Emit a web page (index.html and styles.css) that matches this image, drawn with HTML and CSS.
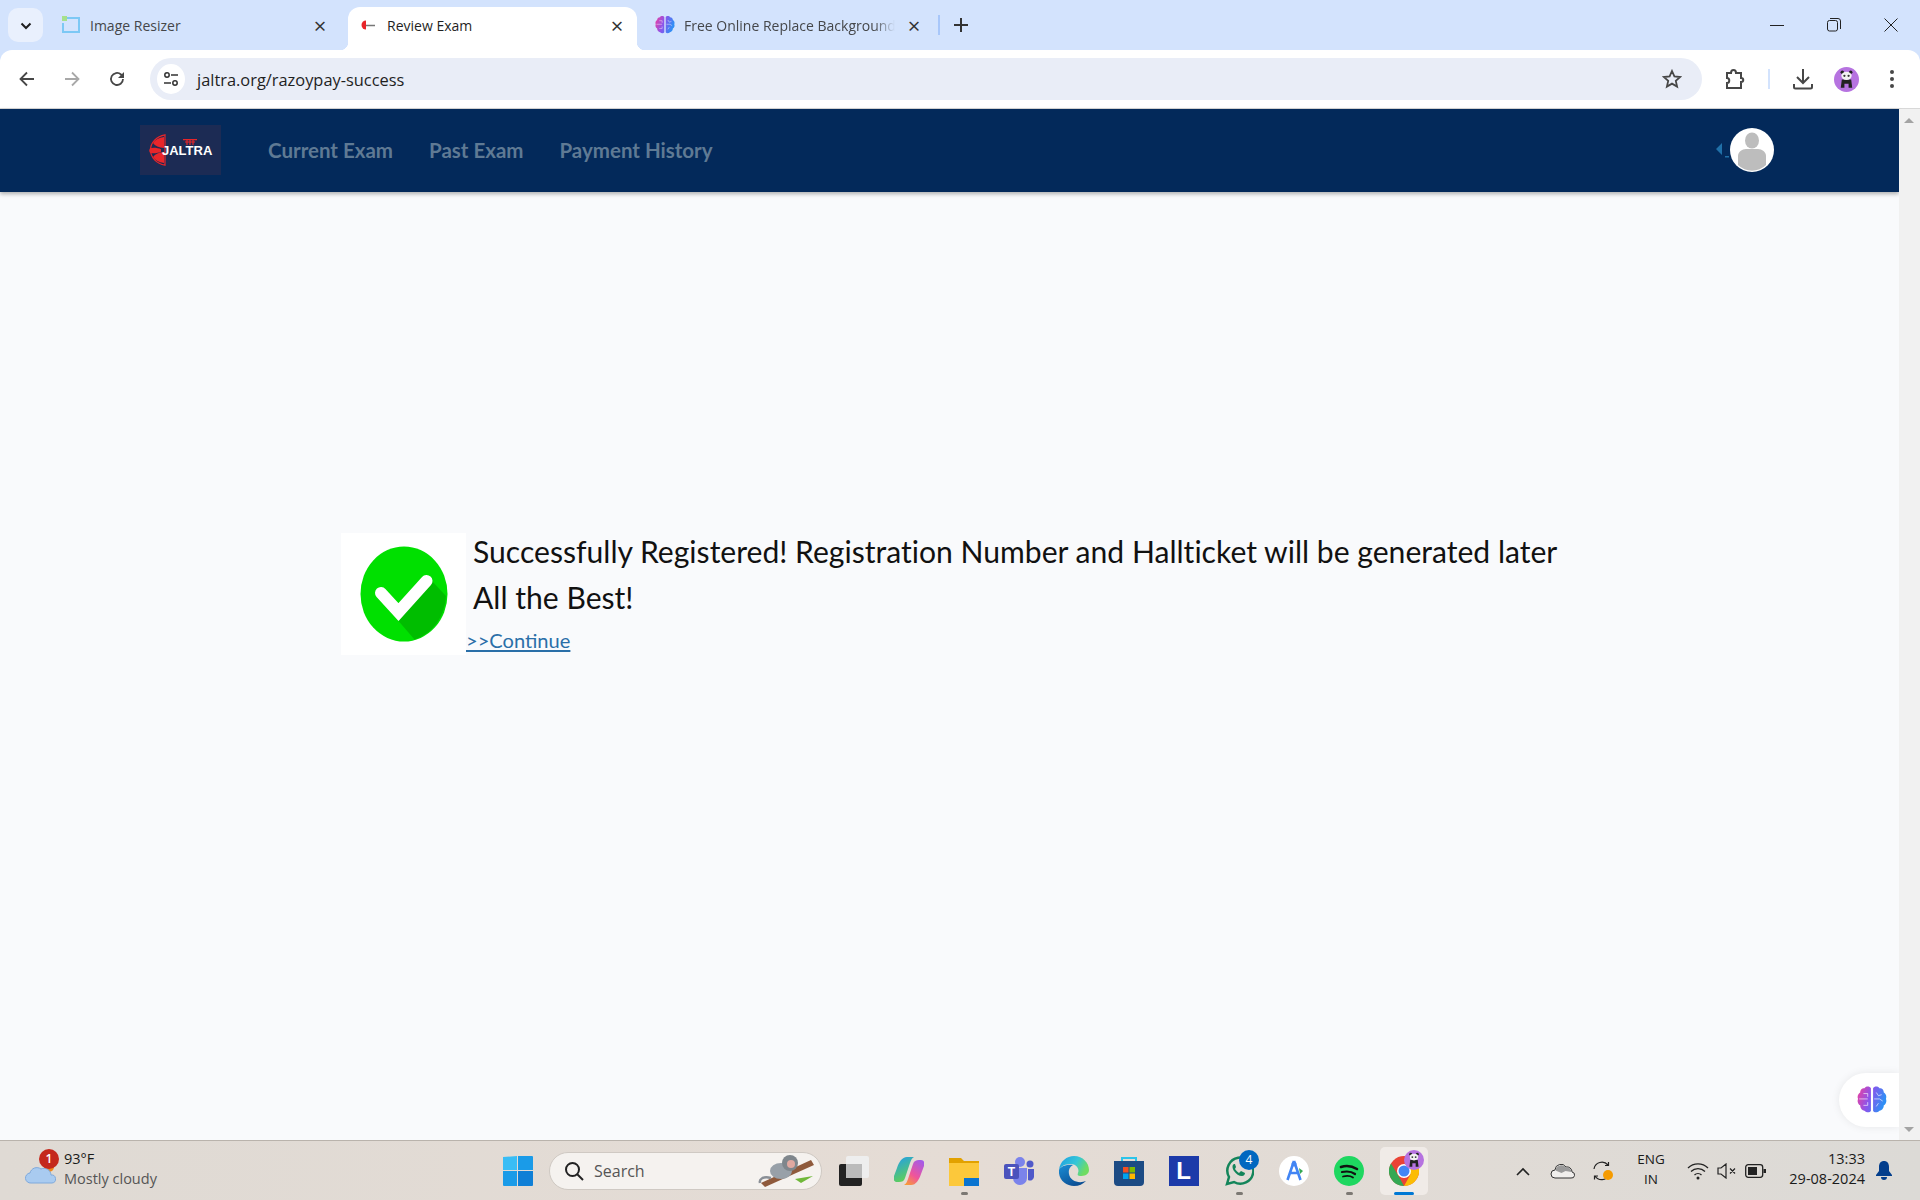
FILE: index.html
```html
<!DOCTYPE html>
<html>
  <head>
    <title>Review Exam</title>
    <link rel="stylesheet" href="styles.css">
  </head>
  <body>
    <svg class="defs" width="0" height="0">
      <defs>
        <linearGradient id="brainGrad" x1="0" y1="0" x2="1" y2="0.3">
          <stop offset="0" stop-color="#f0409c"/>
          <stop offset="0.5" stop-color="#8a55ec"/>
          <stop offset="1" stop-color="#2f8ff5"/>
        </linearGradient>
        <linearGradient id="edgeTop" x1="0" y1="0" x2="1" y2="0.4">
          <stop offset="0" stop-color="#1b9de2"/>
          <stop offset="0.6" stop-color="#35c6d8"/>
          <stop offset="1" stop-color="#6fdc62"/>
        </linearGradient>
        <linearGradient id="edgeLow" x1="0" y1="0" x2="0.6" y2="1">
          <stop offset="0" stop-color="#1a8ed6"/>
          <stop offset="1" stop-color="#0c4f94"/>
        </linearGradient>
        <linearGradient id="copilotLeft" x1="0" y1="0" x2="0.4" y2="1">
          <stop offset="0" stop-color="#1f9cf0"/>
          <stop offset="1" stop-color="#5fcf58"/>
        </linearGradient>
        <linearGradient id="copilotRight" x1="0.8" y1="0" x2="0.2" y2="1">
          <stop offset="0" stop-color="#a45be8"/>
          <stop offset="0.6" stop-color="#f0559a"/>
          <stop offset="1" stop-color="#f79a3a"/>
        </linearGradient>
        <symbol id="brain" viewBox="1 2 28 26">
          <path fill="url(#brainGrad)" d="M14 4c-1-2-5-2-6 0-3 0-4 2-4 4-2 1-3 4-2 6-1 2 0 5 2 6 0 3 2 5 4 5 2 2 5 2 6 0zM16 4c1-2 5-2 6 0 3 0 4 2 4 4 2 1 3 4 2 6 1 2 0 5-2 6 0 3-2 5-4 5-2 2-5 2-6 0z"/>
          <path fill="none" stroke="#fff" stroke-opacity=".65" stroke-width=".9" d="M3 14h8M7 9h4v3M7 20h4v-3M19 8l2 3 3-1M17 14h5l3 2M19 21l2-3"/>
        </symbol>
        <symbol id="panda" viewBox="0 0 24 24">
          <circle cx="12" cy="12" r="12" fill="#b673e0"/>
          <circle cx="8" cy="5" r="1.700" fill="#222"/>
          <circle cx="16" cy="5" r="1.700" fill="#222"/>
          <path fill="#222" d="M7.500 12h9l1 8h-3.500v-4h-4v4H6.500z"/>
          <ellipse cx="12" cy="8.500" rx="5" ry="4" fill="#f2f2f2"/>
          <circle cx="10" cy="8.500" r="1.100" fill="#333"/>
          <circle cx="14" cy="8.500" r="1.100" fill="#333"/>
        </symbol>
      </defs>
    </svg>

    <div class="tabstrip">
      <button class="tab-list">
        <svg width="12" height="8" viewBox="0 0 12 8"><path fill="none" stroke="#1f1f1f" stroke-width="2" d="M1.500 1.500 6 6l4.500-4.500"/></svg>
      </button>
      <div class="tab">
        <svg class="favicon" width="20" height="20" viewBox="0 0 20 20"><path fill="none" stroke="#7cc8f5" stroke-width="2" d="M6 3h12v14H2V8"/><rect x="1" y="1" width="5" height="5" fill="#a6e08c"/></svg>
        <span class="tab-title">Image Resizer</span>
        <span class="tab-close">×</span>
      </div>
      <div class="tab active">
        <svg class="favicon" width="20" height="20" viewBox="0 0 20 20"><path fill="#e8262a" d="M8 5.500v9a4.500 4.500 0 0 1 0-9z"/><path stroke="#777" stroke-width="1.500" d="M8 10.500h9"/></svg>
        <span class="tab-title">Review Exam</span>
        <span class="tab-close">×</span>
      </div>
      <div class="tab">
        <svg class="favicon" width="20" height="20"><use href="#brain"/></svg>
        <span class="tab-title fade">Free Online Replace Background</span>
        <span class="tab-close">×</span>
      </div>
      <span class="tab-sep"></span>
      <span class="new-tab">
        <svg width="14" height="14" viewBox="0 0 14 14"><path stroke="#333" stroke-width="2" d="M7 0v14M0 7h14"/></svg>
      </span>
      <div class="window-controls">
        <svg width="14" height="14" viewBox="0 0 14 14"><path stroke="#222" stroke-width="1" d="M0 7.500h14"/></svg>
        <svg width="14" height="14" viewBox="0 0 14 14"><rect x=".5" y="2.500" width="10" height="10.500" rx="2" fill="none" stroke="#222"/><path fill="none" stroke="#222" d="M3 .5h8a2.500 2.500 0 0 1 2.500 2.500v8"/></svg>
        <svg width="14" height="14" viewBox="0 0 14 14"><path stroke="#222" d="M.5.5l13 13M13.500.5l-13 13"/></svg>
      </div>
    </div>

    <div class="toolbar">
      <svg class="tool" width="16" height="16" viewBox="0 0 16 16"><path fill="none" stroke="#474747" stroke-width="1.800" d="M15 8H2M8 1.500 1.500 8 8 14.500"/></svg>
      <svg class="tool" width="16" height="16" viewBox="0 0 16 16"><path fill="none" stroke="#a8a8a8" stroke-width="1.800" d="M1 8h13M8 1.500 14.500 8 8 14.500"/></svg>
      <svg class="tool" width="16" height="16" viewBox="0 0 16 16"><path fill="none" stroke="#474747" stroke-width="1.800" d="M14 8a6 6 0 1 1-2-4.500L14 5.500"/><path fill="#474747" d="M15 1v6H9z"/></svg>
      <div class="omnibox">
        <span class="site-info">
          <svg width="16" height="16" viewBox="0 0 16 16"><g fill="none" stroke="#333" stroke-width="1.500"><circle cx="4" cy="4" r="2.200"/><circle cx="12" cy="12" r="2.200"/><path d="M8 4h7M1 12h7"/></g></svg>
        </span>
        <span class="url">jaltra.org/razoypay-success</span>
        <svg class="star" width="20" height="20" viewBox="0 0 20 20"><path fill="none" stroke="#474747" stroke-width="1.800" d="m10 2 2.400 5.400 5.800.6-4.400 3.900 1.300 5.700L10 14.600l-5.100 3 1.300-5.700L1.800 8l5.800-.6z"/></svg>
      </div>
      <svg class="tb-puzzle" width="22" height="22" viewBox="0 0 22 22"><path fill="none" stroke="#474747" stroke-width="2" d="M3 5h4c0-4 5-4 5 0h5v5c3 0 3 4 0 4v6H3v-5c3 0 3-5 0-5z"/></svg>
      <span class="tb-sep"></span>
      <svg class="tb-download" width="22" height="22" viewBox="0 0 22 22"><path fill="none" stroke="#474747" stroke-width="2" d="M11 1v13M5 9l6 6 6-6M2 16v3a1.500 1.500 0 0 0 1.500 1.500h15A1.500 1.500 0 0 0 20 19v-3"/></svg>
      <svg class="tb-avatar" width="25" height="25"><use href="#panda"/></svg>
      <svg class="tb-menu" width="4" height="18" viewBox="0 0 4 18"><g fill="#474747"><circle cx="2" cy="2" r="2"/><circle cx="2" cy="9" r="2"/><circle cx="2" cy="16" r="2"/></g></svg>
    </div>

    <div class="viewport">
      <div class="page">
        <nav class="navbar">
          <div class="logo">
            <svg class="logo-mark" width="20" height="32" viewBox="0 0 20 32">
              <path fill="none" stroke="#e8262a" stroke-width="1.200" d="M19 .8A18 15.500 0 0 0 19 31.200z"/>
              <path fill="#e8262a" d="M18 3c-5 .5-9 3-11 6 2 3 6 4.500 11 5zM18 29c-5-.5-9-3-11-6 2-3 6-4.500 11-5zM15 15.200c-3-1.500-8-2-11-1-1 1.500-1 3 0 4.500 3 1 8 .5 11-1z"/>
            </svg>
            <span class="logo-text">JALTRA</span>
            <svg class="logo-gate" width="14" height="6" viewBox="0 0 14 6"><path fill="none" stroke="#e8262a" stroke-width="1.200" d="M0 .7h14M2 3h10M4 1v5M7 1v5M10 1v5"/></svg>
          </div>
          <a class="nav-link">Current Exam</a>
          <a class="nav-link">Past Exam</a>
          <a class="nav-link">Payment History</a>
          <div class="nav-user">
            <svg class="caret" width="14" height="16" viewBox="0 0 14 16"><path fill="#2070a8" d="M6 1v12L0 7zM9 14h4v1.500H9z"/></svg>
            <svg width="44" height="44" viewBox="0 0 44 44">
              <circle cx="22" cy="22" r="22" fill="#fff"/>
              <ellipse cx="22" cy="12.500" rx="7" ry="8" fill="#bdbdbd"/>
              <path fill="#bdbdbd" d="M8 37v-9c0-4 4-7 8-7h12c4 0 8 3 8 7v9a20 20 0 0 1-28 0z"/>
            </svg>
          </div>
        </nav>
        <div class="content">
          <div class="result">
            <div class="check-box">
              <svg width="88" height="96" viewBox="0 0 88 96">
                <ellipse cx="44" cy="48" rx="43.500" ry="47.500" fill="#00e000"/>
                <path fill="#00bd00" d="M71 34 86 50A43.500 47.500 0 0 1 54.500 93.500L38.500 75z"/>
                <path fill="none" stroke="#fff" stroke-width="12" stroke-linecap="round" stroke-linejoin="miter" d="M21 47 38.500 66 66.500 35"/>
              </svg>
            </div>
            <div class="result-body">
              <h3 class="result-title">Successfully Registered! Registration Number and Hallticket will be generated later<br>All the Best!</h3>
              <a class="continue">&gt;&gt;Continue</a>
            </div>
          </div>
        </div>
        <div class="brain-pill">
          <svg width="30" height="28"><use href="#brain"/></svg>
        </div>
      </div>
      <div class="scrollbar">
        <span class="arrow-up"></span>
        <span class="arrow-down"></span>
      </div>
    </div>

    <div class="taskbar">
      <div class="weather">
        <span class="weather-icon">
          <svg width="32" height="24" viewBox="0 0 32 24">
            <circle cx="24" cy="7" r="5" fill="#f08a1d"/>
            <path fill="#a9cbf0" stroke="#7ea9dc" d="M6 23a5 5 0 0 1-1-10 7 7 0 0 1 11-4 7 7 0 0 1 10 6 4 4 0 0 1 1 8z"/>
          </svg>
          <span class="alert-badge">1</span>
        </span>
        <div class="weather-text">
          <div class="temp">93°F</div>
          <div class="cond">Mostly cloudy</div>
        </div>
      </div>

      <span class="start">
        <svg width="30" height="30" viewBox="0 0 30 30"><g fill="#1a9be8"><path fill="#39bdf5" d="M0 1 14 0v14H0z"/><path d="M15 0h14a1 1 0 0 1 1 1v13H15z"/><path d="M0 15h14v15H1a1 1 0 0 1-1-1z"/><path fill="#0f7fd6" d="M15 15h15v14a1 1 0 0 1-1 1H15z"/></g></svg>
      </span>

      <div class="searchbox">
        <svg width="20" height="20" viewBox="0 0 20 20"><g fill="none" stroke="#222" stroke-width="2"><circle cx="8.500" cy="8.500" r="6.500"/><path d="m13 13 6 6"/></g></svg>
        <span class="search-text">Search</span>
        <svg class="monkey" width="58" height="34" viewBox="0 0 58 34">
          <path fill="#8f5a3c" d="M4 29 54 6l3 5L8 33z"/>
          <path fill="#70b83a" d="m38 25 18-3-12 7z"/>
          <path fill="none" stroke="#8a8f96" stroke-width="2.500" d="M14 24c-8-2-12 1-11 5"/>
          <ellipse cx="24" cy="17" rx="11" ry="8" fill="#98a0a8"/>
          <circle cx="33" cy="9" r="8" fill="#7f868c"/>
          <circle cx="34" cy="10" r="4" fill="#e0a8a0"/>
        </svg>
      </div>

      <span class="task">
        <svg width="30" height="30" viewBox="0 0 30 30"><rect x="0" y="8" width="23" height="22" rx="2" fill="#222"/><rect x="7" y="0" width="23" height="22" rx="2" fill="#eee"/><rect x="7" y="8" width="16" height="14" fill="#bbb"/></svg>
      </span>
      <span class="task">
        <svg width="30" height="28" viewBox="0 0 30 28">
          <path fill="url(#copilotLeft)" d="M13 0h7c-2 1-3 3-4 6l-5 15c-1 3-3 4-6 4H3c-3 0-4-3-3-6l3-8C5 5 8 0 13 0z"/>
          <path fill="url(#copilotRight)" d="M17 28h-7c2-1 3-3 4-6l5-15c1-3 3-4 6-4h2c3 0 4 3 3 6l-3 8c-2 6-5 11-10 11z"/>
        </svg>
      </span>
      <span class="task running">
        <svg width="30" height="30" viewBox="0 0 30 30"><path fill="#e2a100" d="M0 2h12l3 3h15v6H0z"/><path fill="#fcc83b" d="M0 7h30v23H0z"/><path fill="#0a74d0" d="M15 30V22h15v8z"/></svg>
      </span>
      <span class="task">
        <svg width="30" height="28" viewBox="0 0 30 28"><circle cx="16" cy="5" r="5" fill="#7b83eb"/><circle cx="26" cy="7" r="3.500" fill="#5059c9"/><path fill="#7b83eb" d="M9 11h14v10a7 7 0 0 1-14 0z"/><path fill="#5059c9" d="M24 12h6v8a4 4 0 0 1-6 3z"/><rect y="7" width="15" height="15" rx="2" fill="#4b53bc"/><text class="teams-t" x="7.500" y="19">T</text></svg>
      </span>
      <span class="task">
        <svg width="30" height="30" viewBox="0 0 30 30">
          <path fill="url(#edgeTop)" d="M0 14C1 5 8 0 15 0c9 0 15 7 15 14 0 5-5 6-9 6-2 0-3-1-2-3 2-4-2-9-7-9-6 0-10 2-12 6z"/>
          <path fill="url(#edgeLow)" d="M0 14c-1 10 7 16 15 16 5 0 9-2 12-5-7 3-16 0-17-7-1-5 2-8 4-9C7 8 1 11 0 14z"/>
        </svg>
      </span>
      <span class="task">
        <svg width="30" height="30" viewBox="0 0 30 30"><path fill="none" stroke="#2cc4ea" stroke-width="2" d="M8 6V2h14v4"/><path fill="#1c4b84" d="M0 5h30v21a4 4 0 0 1-4 4H4a4 4 0 0 1-4-4z"/><rect x="9" y="11" width="5.500" height="5.500" fill="#f25022"/><rect x="15.500" y="11" width="5.500" height="5.500" fill="#7fba00"/><rect x="9" y="17.500" width="5.500" height="5.500" fill="#00a4ef"/><rect x="15.500" y="17.500" width="5.500" height="5.500" fill="#ffb900"/></svg>
      </span>
      <span class="task">
        <span class="l-app">L</span>
      </span>
      <span class="task running">
        <svg width="30" height="30" viewBox="0 0 30 30"><path fill="none" stroke="#14855a" stroke-width="2.500" d="M3 28l2-7a13 13 0 1 1 5 5z"/><path fill="#14855a" d="M10 8c-2 1-2 4 0 7 2 3 5 5 8 5 2 0 3-2 3-3l-4-2-2 2c-2-1-3-3-4-4l1-2-1-3z"/></svg>
        <span class="count-badge">4</span>
      </span>
      <span class="task">
        <svg width="30" height="30" viewBox="0 0 30 30"><circle cx="15" cy="15" r="15" fill="#fff"/><path fill="none" stroke="#4285f4" stroke-width="2.600" d="M15 5 8.500 24M15 5l6.500 19M10 17h10"/><circle cx="15" cy="8" r="2.500" fill="#4285f4"/><path fill="#34a853" d="M20 12l4 3-3 3z"/></svg>
      </span>
      <span class="task running">
        <svg width="30" height="30" viewBox="0 0 30 30"><circle cx="15" cy="15" r="15" fill="#1ed760"/><g fill="none" stroke="#111" stroke-linecap="round"><path stroke-width="2.600" d="M7 11c6-2 11-1 16 2"/><path stroke-width="2.200" d="M8 16c5-1 9-1 13 2"/><path stroke-width="1.800" d="M9 20.500c4-1 7-1 10 1"/></g></svg>
      </span>
      <span class="task current">
        <svg class="chrome" width="30" height="30" viewBox="0 0 30 30">
          <circle cx="15" cy="15" r="15" fill="#ea4335"/>
          <path fill="#34a853" d="M15 30A15 15 0 0 1 2 7.500L9 19l6 11z"/>
          <path fill="#fbbc04" d="M28 7.500A15 15 0 0 1 15 30l6.500-11.500L15 8h13z"/>
          <circle cx="15" cy="15" r="7" fill="#fff"/>
          <circle cx="15" cy="15" r="5.500" fill="#4285f4"/>
        </svg>
        <svg class="chrome-profile" width="20" height="20"><use href="#panda"/></svg>
      </span>

      <div class="tray">
        <svg class="tray-item" width="40" height="14" viewBox="0 0 40 14"><path fill="none" stroke="#222" stroke-width="1.600" d="m14 11 6-6 6 6"/></svg>
        <svg class="tray-item" width="40" height="16" viewBox="0 0 40 16"><path fill="#f0eeec" stroke="#333" d="M12 15a4 4 0 0 1 0-8 6 6 0 0 1 11-3 5 5 0 0 1 6 5 3 3 0 0 1-1 6z"/><path fill="#9a9a9a" d="M12.500 7.500a6 6 0 0 1 10.500-3 5 5 0 0 1 5.500 4.500l-6-1-4 2z"/></svg>
        <svg class="tray-item" width="40" height="22" viewBox="0 0 40 22"><g fill="none" stroke="#222" stroke-width="1.200"><path d="M11 9A8 8 0 0 1 25 5M22 5.500h3.500V2"/><path d="M26 15a8 8 0 0 1-14 1M15 16h-3.500v3.500"/></g><circle cx="25" cy="15" r="5" fill="#f59b00"/></svg>
        <div class="lang">ENG<br>IN</div>
        <svg class="tray-icon" width="22" height="18" viewBox="0 0 22 18"><g fill="none" stroke="#222" stroke-width="1.300"><path d="M1 6a14 14 0 0 1 20 0"/><path d="M4 9.500a10 10 0 0 1 14 0"/><path d="M7.500 13a5 5 0 0 1 7 0"/></g><circle cx="11" cy="16" r="1.500" fill="#222"/></svg>
        <svg class="tray-icon" width="20" height="16" viewBox="0 0 20 16"><path fill="none" stroke="#222" stroke-width="1.200" d="M1 5v6h3l5 4V1L4 5zM13 5.500l5 5M18 5.500l-5 5"/></svg>
        <svg class="tray-icon" width="21" height="14" viewBox="0 0 21 14"><rect x=".7" y=".7" width="17" height="12.600" rx="2.500" fill="none" stroke="#222" stroke-width="1.300"/><rect x="3" y="3" width="9" height="8" fill="#222"/><rect x="18.500" y="5" width="2.500" height="4" fill="#222"/></svg>
        <div class="clock">13:33<br>29-08-2024</div>
        <svg class="bell" width="18" height="20" viewBox="0 0 18 20"><path fill="#033e8c" d="M9 0c3 0 5 2 5 6v4l3 4v1H1v-1l3-4V6c0-4 2-6 5-6zM6 16h6a3 3 0 0 1-6 0z"/></svg>
      </div>
    </div>
  </body>
</html>
```

FILE: styles.css
```css
* {
  box-sizing: border-box;
}
html, body {
  margin: 0;
  padding: 0;
  height: 100%;
}
body {
  display: flex;
  flex-direction: column;
  height: 1200px;
  overflow: hidden;
  background: #d3e3fd;
  font-family: "Open Sans", "Noto Sans", sans-serif;
}
.defs {
  position: absolute;
}

/* browser tabs */
.tabstrip {
  display: flex;
  align-items: flex-start;
  height: 50px;
  padding-left: 8px;
  flex: none;
}
.tab-list {
  width: 35px;
  height: 34px;
  margin-top: 8px;
  margin-right: 8px;
  padding: 0;
  border: 0;
  border-radius: 10px;
  background: #e9f0fd;
}
.tab {
  display: flex;
  align-items: center;
  position: relative;
  width: 289px;
  height: 43px;
  margin-top: 7px;
  margin-right: 8px;
  padding: 0 10px 7px;
  border-radius: 12px 12px 0 0;
  color: #45474a;
  font-size: 14px;
}
.tab.active {
  background: #fff;
  color: #1f1f1f;
}
.tab.active::before,
.tab.active::after {
  content: "";
  position: absolute;
  bottom: 0;
  width: 8px;
  height: 8px;
}
.tab.active::before {
  left: -8px;
  background: radial-gradient(circle at 0 0, transparent 8px, #fff 8.5px);
}
.tab.active::after {
  right: -8px;
  background: radial-gradient(circle at 100% 0, transparent 8px, #fff 8.5px);
}
.favicon {
  flex: none;
  margin-right: 9px;
}
.tab-title {
  flex: 1;
  margin-right: 9px;
  overflow: hidden;
  white-space: nowrap;
}
.tab-title.fade {
  -webkit-mask-image: linear-gradient(to right, #000 90%, transparent 100%);
}
.tab-close {
  width: 20px;
  text-align: center;
  font-size: 22px;
  line-height: 20px;
  color: #333;
}
.tab-sep {
  width: 2px;
  height: 20px;
  margin-top: 15px;
  margin-left: -4px;
  background: #a8c7fa;
}
.new-tab {
  display: flex;
  margin-top: 18px;
  margin-left: 14px;
}
.window-controls {
  display: flex;
  gap: 43px;
  margin-left: auto;
  margin-top: 18px;
  padding-right: 22px;
}

/* browser toolbar */
.toolbar {
  display: flex;
  align-items: center;
  flex: none;
  height: 59px;
  padding: 0 0 0 19px;
  background: #fff;
  border-radius: 12px 12px 0 0;
  border-bottom: 1px solid #d8d8d8;
}
.tool {
  margin-right: 29px;
}
.omnibox {
  display: flex;
  align-items: center;
  width: 1552px;
  height: 42px;
  margin-left: -4px;
  padding: 0 20px 0 7px;
  background: #e9edf7;
  border-radius: 21px;
}
.site-info {
  display: flex;
  align-items: center;
  justify-content: center;
  width: 28px;
  height: 30px;
  margin-right: 12px;
  border-radius: 50%;
  background: #fff;
}
.url {
  flex: 1;
  font-size: 16.4px;
  color: #1f1f1f;
}
.tb-puzzle {
  margin-left: 22px;
}
.tb-sep {
  width: 2px;
  height: 20px;
  margin-left: 22px;
  background: #d3e3fd;
}
.tb-download {
  margin-left: 22px;
}
.tb-avatar {
  margin-left: 20px;
}
.tb-menu {
  margin-left: 31px;
}

/* page */
.viewport {
  display: flex;
  flex: 1;
  min-height: 0;
}
.page {
  position: relative;
  flex: 1;
  display: flex;
  flex-direction: column;
  background: #f9fafc;
  font-family: Lato, sans-serif;
}
.navbar {
  display: flex;
  align-items: center;
  flex: none;
  height: 83px;
  padding: 0 125px 2px 140px;
  background: #03295a;
  box-shadow: 0 2px 4px rgba(0, 0, 0, 0.3);
}
.logo {
  position: relative;
  display: flex;
  align-items: center;
  width: 81px;
  height: 50px;
  margin-right: 47px;
  padding-left: 6px;
  background: #1c2b54;
}
.logo-text {
  margin-left: -4px;
  margin-top: 1px;
  color: #fff;
  font-family: "Liberation Sans", sans-serif;
  font-size: 13px;
  font-weight: bold;
}
.logo-gate {
  position: absolute;
  top: 14px;
  left: 43px;
}
.nav-link {
  margin-right: 36px;
  color: #5f7a94;
  font-size: 20.5px;
  font-weight: 700;
}
.nav-user {
  display: flex;
  align-items: center;
  margin-left: auto;
}
.content {
  flex: 1;
  padding: 341px 0 0 341px;
}
.result {
  display: flex;
  align-items: flex-start;
}
.check-box {
  display: flex;
  align-items: center;
  justify-content: center;
  width: 125px;
  height: 122px;
  background: #fff;
}
.result-title {
  margin: -5px 0 0 7px;
  color: #111;
  font-size: 30.1px;
  font-weight: 400;
  line-height: 46px;
  font-variant-ligatures: none;
}
.continue {
  display: block;
  margin-top: 8px;
  color: #2a6fa8;
  font-size: 20.1px;
  line-height: 24px;
  text-decoration: underline;
}
.brain-pill {
  position: absolute;
  right: 0;
  bottom: 13px;
  display: flex;
  align-items: center;
  width: 60px;
  height: 54px;
  padding-left: 18px;
  background: #fff;
  border-radius: 27px 0 0 27px;
  box-shadow: 0 0 8px rgba(0, 0, 0, 0.08);
}
.scrollbar {
  position: relative;
  flex: none;
  width: 21px;
  background: #f1f1f1;
}
.arrow-up,
.arrow-down {
  position: absolute;
  left: 5px;
  width: 0;
  height: 0;
  border-left: 5px solid transparent;
  border-right: 5px solid transparent;
}
.arrow-up {
  top: 9px;
  border-bottom: 5px solid #a3a3a3;
}
.arrow-down {
  bottom: 8px;
  border-top: 5px solid #a3a3a3;
}

/* windows taskbar */
.taskbar {
  display: flex;
  align-items: center;
  flex: none;
  height: 60px;
  background: linear-gradient(to right, #dfdad4, #e5dcd5 50%, #dcdad6);
  border-top: 1px solid #b9b3ac;
  font-size: 14px;
  color: #1a1a1a;
}
.weather {
  display: flex;
  align-items: center;
  width: 503px;
  padding-left: 25px;
}
.weather-icon {
  position: relative;
  display: flex;
  width: 39px;
  padding-top: 2px;
}
.alert-badge {
  position: absolute;
  top: -9px;
  left: 14px;
  width: 20px;
  height: 20px;
  border-radius: 50%;
  background: #c4281c;
  color: #fff;
  font-size: 12px;
  font-weight: 600;
  line-height: 20px;
  text-align: center;
}
.weather-text {
  margin-top: -3px;
}
.temp {
  font-size: 14.5px;
  line-height: 20px;
}
.cond {
  font-size: 14.5px;
  line-height: 20px;
  color: #555;
}
.start {
  display: flex;
  width: 46px;
}
.searchbox {
  display: flex;
  align-items: center;
  position: relative;
  width: 273px;
  height: 38px;
  padding-left: 14px;
  background: #f5f2ef;
  border: 1px solid #cfc9c3;
  border-radius: 19px;
}
.search-text {
  margin-left: 10px;
  font-size: 16px;
  color: #555;
}
.monkey {
  position: absolute;
  right: 6px;
  top: 1px;
}
.task {
  position: relative;
  display: flex;
  align-items: center;
  justify-content: center;
  width: 55px;
  height: 48px;
}
.searchbox + .task {
  margin-left: 4px;
}
.task.running::after,
.task.current::after {
  content: "";
  position: absolute;
  bottom: 0;
  left: 50%;
  width: 7px;
  height: 3px;
  margin-left: -3px;
  border-radius: 2px;
  background: #7c7873;
}
.task.current::before {
  content: "";
  position: absolute;
  top: 0;
  left: 4px;
  width: 48px;
  height: 48px;
  border-radius: 5px;
  background: #f0ebe7;
}
.chrome {
  position: relative;
}
.task.current::after {
  width: 20px;
  margin-left: -10px;
  background: #0078d4;
}
.teams-t {
  fill: #fff;
  font-family: "Liberation Sans", sans-serif;
  font-size: 12px;
  font-weight: bold;
  text-anchor: middle;
}
.l-app {
  display: block;
  width: 30px;
  height: 30px;
  background: #1c3aa9;
  color: #fff;
  font-family: "Liberation Sans", sans-serif;
  font-size: 24px;
  font-weight: bold;
  line-height: 30px;
  text-align: center;
}
.count-badge {
  position: absolute;
  top: 3px;
  right: 7px;
  width: 20px;
  height: 20px;
  border-radius: 50%;
  background: #0067c0;
  color: #fff;
  font-size: 12px;
  line-height: 20px;
  text-align: center;
}
.chrome-profile {
  position: absolute;
  top: 3px;
  right: 7px;
}
.tray {
  display: flex;
  align-items: center;
  margin-left: 72px;
}
.lang {
  width: 56px;
  margin-top: -3px;
  font-size: 13.5px;
  line-height: 20px;
  text-align: center;
}
.tray-icon {
  margin-left: 8px;
}
.clock {
  width: 100px;
  margin-left: -1px;
  margin-top: -3px;
  font-size: 14.5px;
  line-height: 20px;
  text-align: right;
}
.bell {
  margin-left: 10px;
}
```
